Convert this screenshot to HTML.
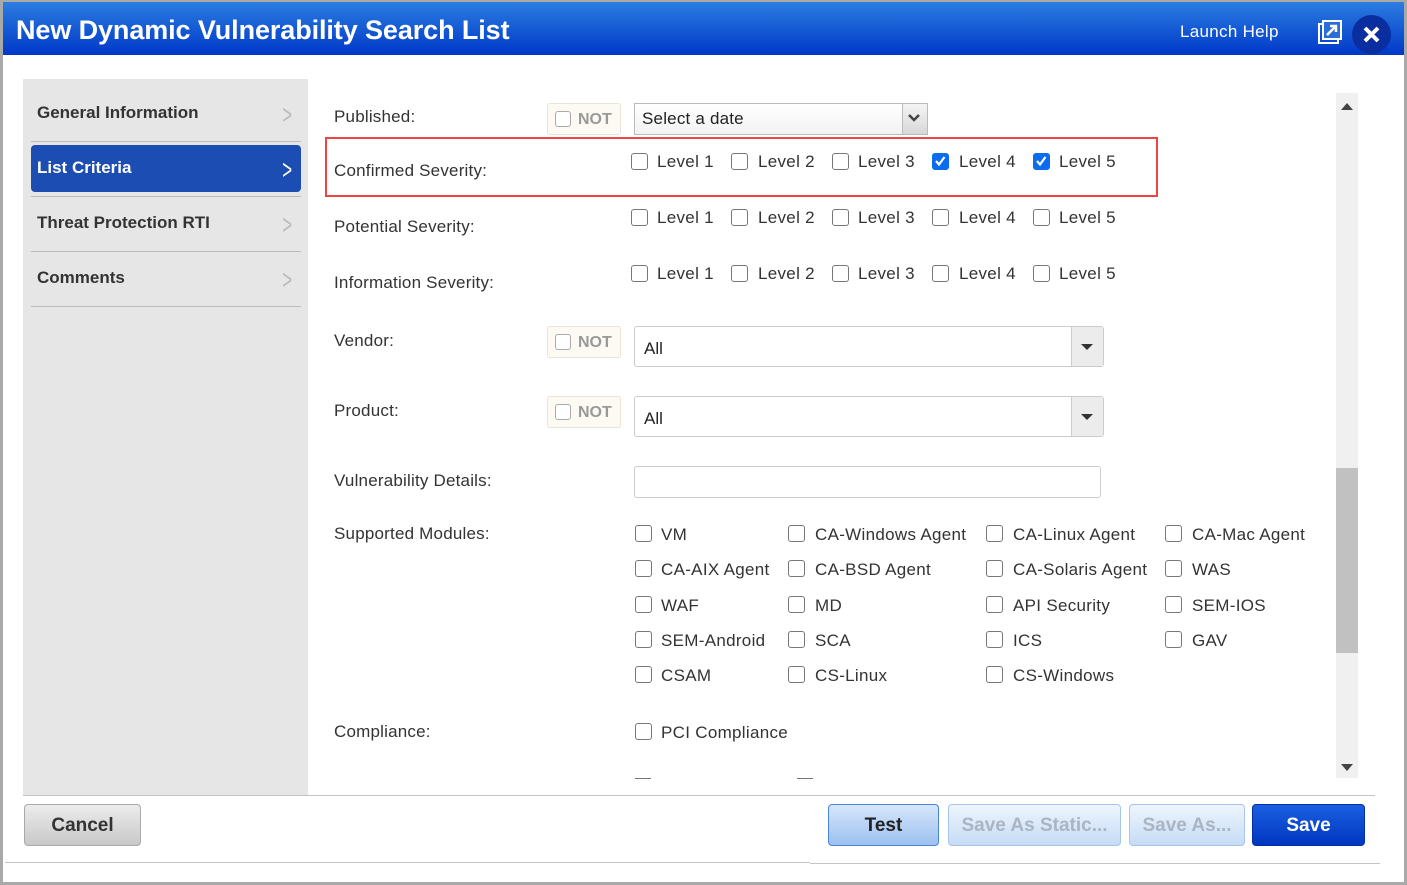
<!DOCTYPE html>
<html><head><meta charset="utf-8"><style>
*{box-sizing:border-box;margin:0;padding:0}
body{width:1407px;height:885px;position:relative;background:#fff;font-family:"Liberation Sans",Arial,sans-serif;overflow:hidden;color:#333}
.a{position:absolute}
.frame{left:0;top:0;width:1407px;height:885px;border:3px solid #a9a9a9;border-top-width:2px}
.title{left:3px;top:2px;width:1401px;height:53px;background:linear-gradient(#2b7de0,#0038c8)}
.cb{position:absolute;width:17px;height:17px;border:1.5px solid #777;border-radius:3px;background:#fff}
.cb.on{background:#0b6cf0;border-color:#0b6cf0}
.t{position:absolute;font-size:17px;color:#333;white-space:nowrap;line-height:20px;letter-spacing:0.3px}
.lbl{position:absolute;left:334px;font-size:17px;color:#333;line-height:20px;letter-spacing:0.2px}
.side{left:23px;top:79px;width:285px;height:716px;background:#e6e6e6}
.nav{position:absolute;left:37px;font-size:17px;font-weight:bold;color:#333}
.hr{position:absolute;left:31px;width:270px;height:1px;background:#bcbcbc}
.chev{position:absolute;left:279px;font-size:28px;color:#bbb;transform:scaleX(.6);line-height:28px}
.not{position:absolute;left:547px;width:74px;height:32px;border:1px solid #e8e4d8;border-radius:3px;background:#fcfaf3}
.not .cb{left:7px;top:7px;width:16px;height:16px;border-color:#aaa}
.not span{position:absolute;left:30px;top:7px;font-size:16px;font-weight:bold;color:#999}
.sel{position:absolute;left:634px;width:470px;height:41px;border:1px solid #ccc;border-radius:3px;background:#fff}
.sel .v{position:absolute;left:9px;top:12px;font-size:17px;color:#222}
.sel .b{position:absolute;right:0;top:0;width:32px;height:39px;background:#ececec;border-left:1px solid #ccc}
.btn{position:absolute;top:804px;height:42px;border-radius:4px;font-size:19px;font-weight:bold;text-align:center;line-height:42px}
</style></head><body>
<div class="a frame"></div>
<div class="a title"></div>
<div class="a" style="left:16px;top:15px;font-size:27px;font-weight:bold;color:#fff;letter-spacing:-0.1px">New Dynamic Vulnerability Search List</div>
<div class="a" style="left:1180px;top:22px;font-size:17px;color:#fff;letter-spacing:0.3px">Launch Help</div>
<svg class="a" style="left:1318px;top:20px" width="24" height="25" viewBox="0 0 24 25"><rect x="1" y="4" width="19" height="19" fill="none" stroke="#fff" stroke-width="2"/><rect x="5" y="1" width="18" height="18" fill="#2a6fd8" stroke="#fff" stroke-width="2"/><path d="M9 15 L18 6 M12 6 H18 V12" stroke="#fff" stroke-width="2.5" fill="none"/></svg>
<div class="a" style="left:1352px;top:15px;width:39px;height:39px;border-radius:50%;background:#0a2ea0"></div>
<svg class="a" style="left:1362px;top:25px" width="19" height="19"><path d="M3 3 L16 16 M16 3 L3 16" stroke="#fff" stroke-width="4"/></svg>

<div class="a side"></div>
<div class="nav" style="top:103px">General Information</div>
<div class="chev" style="top:101px">&gt;</div>
<div class="hr" style="top:141px"></div>
<div class="a" style="left:31px;top:145px;width:270px;height:47px;background:#1c4db3;border-radius:4px"></div>
<div class="nav" style="top:158px;color:#fff">List Criteria</div>
<div class="chev" style="top:156px;color:#fff">&gt;</div>
<div class="hr" style="top:196px"></div>
<div class="nav" style="top:213px">Threat Protection RTI</div>
<div class="chev" style="top:211px">&gt;</div>
<div class="hr" style="top:251px"></div>
<div class="nav" style="top:268px">Comments</div>
<div class="chev" style="top:266px">&gt;</div>
<div class="hr" style="top:306px"></div>

<div class="a" style="left:1336px;top:93px;width:22px;height:685px;background:#f0f0f0"></div>
<div class="a" style="left:1336px;top:468px;width:22px;height:185px;background:#c1c1c1"></div>
<div class="a" style="left:1341px;top:103px;border:6px solid transparent;border-bottom:7px solid #444;border-top:0"></div>
<div class="a" style="left:1341px;top:764px;border:6px solid transparent;border-top:7px solid #444;border-bottom:0"></div>

<div class="lbl" style="top:107px">Published:</div>
<div class="not" style="top:103px"><div class="cb"></div><span>NOT</span></div>
<div class="a" style="left:634px;top:103px;width:294px;height:32px;border:1px solid #bbb;background:linear-gradient(#fff,#f2f2f2)"></div>
<div class="a" style="left:642px;top:109px;font-size:17px;color:#222;letter-spacing:0.2px">Select a date</div>
<div class="a" style="left:902px;top:104px;width:25px;height:30px;background:linear-gradient(#f4f4f4,#d8d8d8);border-left:1px solid #bbb"></div>
<svg class="a" style="left:907px;top:113px" width="14" height="10"><path d="M2 2 L7 7 L12 2" stroke="#444" stroke-width="2.5" fill="none"/></svg>

<div class="a" style="left:325px;top:137px;width:833px;height:60px;border:2px solid #ef4444"></div>
<div class="lbl" style="top:161px">Confirmed Severity:</div>
<div class="lbl" style="top:217px">Potential Severity:</div>
<div class="lbl" style="top:273px">Information Severity:</div>

<div class="cb" style="left:631px;top:153px"></div><div class="t" style="left:657px;top:152px">Level 1</div>
<div class="cb" style="left:731px;top:153px"></div><div class="t" style="left:758px;top:152px">Level 2</div>
<div class="cb" style="left:832px;top:153px"></div><div class="t" style="left:858px;top:152px">Level 3</div>
<div class="cb on" style="left:932px;top:153px"><svg width="14" height="14" style="position:absolute;left:0;top:0"><path d="M3 7 L6 10.5 L11.5 3" stroke="#fff" stroke-width="2.2" fill="none"/></svg></div><div class="t" style="left:959px;top:152px">Level 4</div>
<div class="cb on" style="left:1033px;top:153px"><svg width="14" height="14" style="position:absolute;left:0;top:0"><path d="M3 7 L6 10.5 L11.5 3" stroke="#fff" stroke-width="2.2" fill="none"/></svg></div><div class="t" style="left:1059px;top:152px">Level 5</div>

<div class="cb" style="left:631px;top:209px"></div><div class="t" style="left:657px;top:208px">Level 1</div>
<div class="cb" style="left:731px;top:209px"></div><div class="t" style="left:758px;top:208px">Level 2</div>
<div class="cb" style="left:832px;top:209px"></div><div class="t" style="left:858px;top:208px">Level 3</div>
<div class="cb" style="left:932px;top:209px"></div><div class="t" style="left:959px;top:208px">Level 4</div>
<div class="cb" style="left:1033px;top:209px"></div><div class="t" style="left:1059px;top:208px">Level 5</div>

<div class="cb" style="left:631px;top:265px"></div><div class="t" style="left:657px;top:264px">Level 1</div>
<div class="cb" style="left:731px;top:265px"></div><div class="t" style="left:758px;top:264px">Level 2</div>
<div class="cb" style="left:832px;top:265px"></div><div class="t" style="left:858px;top:264px">Level 3</div>
<div class="cb" style="left:932px;top:265px"></div><div class="t" style="left:959px;top:264px">Level 4</div>
<div class="cb" style="left:1033px;top:265px"></div><div class="t" style="left:1059px;top:264px">Level 5</div>

<div class="lbl" style="top:331px">Vendor:</div>
<div class="not" style="top:326px"><div class="cb"></div><span>NOT</span></div>
<div class="sel" style="top:326px"><span class="v">All</span><div class="b"></div><div class="a" style="right:10px;top:17px;border:6px solid transparent;border-top:6px solid #333;border-bottom:0"></div></div>
<div class="lbl" style="top:401px">Product:</div>
<div class="not" style="top:396px"><div class="cb"></div><span>NOT</span></div>
<div class="sel" style="top:396px"><span class="v">All</span><div class="b"></div><div class="a" style="right:10px;top:17px;border:6px solid transparent;border-top:6px solid #333;border-bottom:0"></div></div>

<div class="lbl" style="top:471px">Vulnerability Details:</div>
<div class="a" style="left:634px;top:466px;width:467px;height:32px;border:1px solid #ccc;border-radius:3px"></div>

<div class="lbl" style="top:524px">Supported Modules:</div>
<div class="cb" style="left:635px;top:525px"></div><div class="t" style="left:661px;top:525px">VM</div>
<div class="cb" style="left:788px;top:525px"></div><div class="t" style="left:815px;top:525px">CA-Windows Agent</div>
<div class="cb" style="left:986px;top:525px"></div><div class="t" style="left:1013px;top:525px">CA-Linux Agent</div>
<div class="cb" style="left:1165px;top:525px"></div><div class="t" style="left:1192px;top:525px">CA-Mac Agent</div>

<div class="cb" style="left:635px;top:560px"></div><div class="t" style="left:661px;top:560px">CA-AIX Agent</div>
<div class="cb" style="left:788px;top:560px"></div><div class="t" style="left:815px;top:560px">CA-BSD Agent</div>
<div class="cb" style="left:986px;top:560px"></div><div class="t" style="left:1013px;top:560px">CA-Solaris Agent</div>
<div class="cb" style="left:1165px;top:560px"></div><div class="t" style="left:1192px;top:560px">WAS</div>

<div class="cb" style="left:635px;top:596px"></div><div class="t" style="left:661px;top:596px">WAF</div>
<div class="cb" style="left:788px;top:596px"></div><div class="t" style="left:815px;top:596px">MD</div>
<div class="cb" style="left:986px;top:596px"></div><div class="t" style="left:1013px;top:596px">API Security</div>
<div class="cb" style="left:1165px;top:596px"></div><div class="t" style="left:1192px;top:596px">SEM-IOS</div>

<div class="cb" style="left:635px;top:631px"></div><div class="t" style="left:661px;top:631px">SEM-Android</div>
<div class="cb" style="left:788px;top:631px"></div><div class="t" style="left:815px;top:631px">SCA</div>
<div class="cb" style="left:986px;top:631px"></div><div class="t" style="left:1013px;top:631px">ICS</div>
<div class="cb" style="left:1165px;top:631px"></div><div class="t" style="left:1192px;top:631px">GAV</div>

<div class="cb" style="left:635px;top:666px"></div><div class="t" style="left:661px;top:666px">CSAM</div>
<div class="cb" style="left:788px;top:666px"></div><div class="t" style="left:815px;top:666px">CS-Linux</div>
<div class="cb" style="left:986px;top:666px"></div><div class="t" style="left:1013px;top:666px">CS-Windows</div>

<div class="lbl" style="top:722px">Compliance:</div>
<div class="cb" style="left:635px;top:723px"></div><div class="t" style="left:661px;top:723px">PCI Compliance</div>
<div class="a" style="left:635px;top:778px;width:16px;height:1px;background:#777"></div>
<div class="a" style="left:797px;top:778px;width:16px;height:1px;background:#777"></div>

<div class="a" style="left:23px;top:795px;width:1352px;height:1px;background:#c4c4c4"></div>
<div class="a" style="left:5px;top:862px;width:805px;height:1px;background:#c4c4c4"></div>
<div class="a" style="left:810px;top:863px;width:570px;height:1px;background:#c4c4c4"></div>

<div class="btn" style="left:24px;width:117px;background:linear-gradient(#ececec,#c8c8c8);border:1px solid #aaa;color:#333">Cancel</div>
<div class="btn" style="left:828px;width:111px;background:linear-gradient(#d6e6fb,#9cc0ef);border:1px solid #4a86d6;color:#222">Test</div>
<div class="btn" style="left:948px;width:173px;background:linear-gradient(#eef5fd,#c6dcf6);border:1px solid #a7c4ea;color:#aab4c2">Save As Static...</div>
<div class="btn" style="left:1129px;width:116px;background:linear-gradient(#eef5fd,#c6dcf6);border:1px solid #a7c4ea;color:#aab4c2">Save As...</div>
<div class="btn" style="left:1252px;width:113px;background:linear-gradient(#1a5fe0,#0036c0);border:1px solid #0030a8;color:#fff">Save</div>
</body></html>
